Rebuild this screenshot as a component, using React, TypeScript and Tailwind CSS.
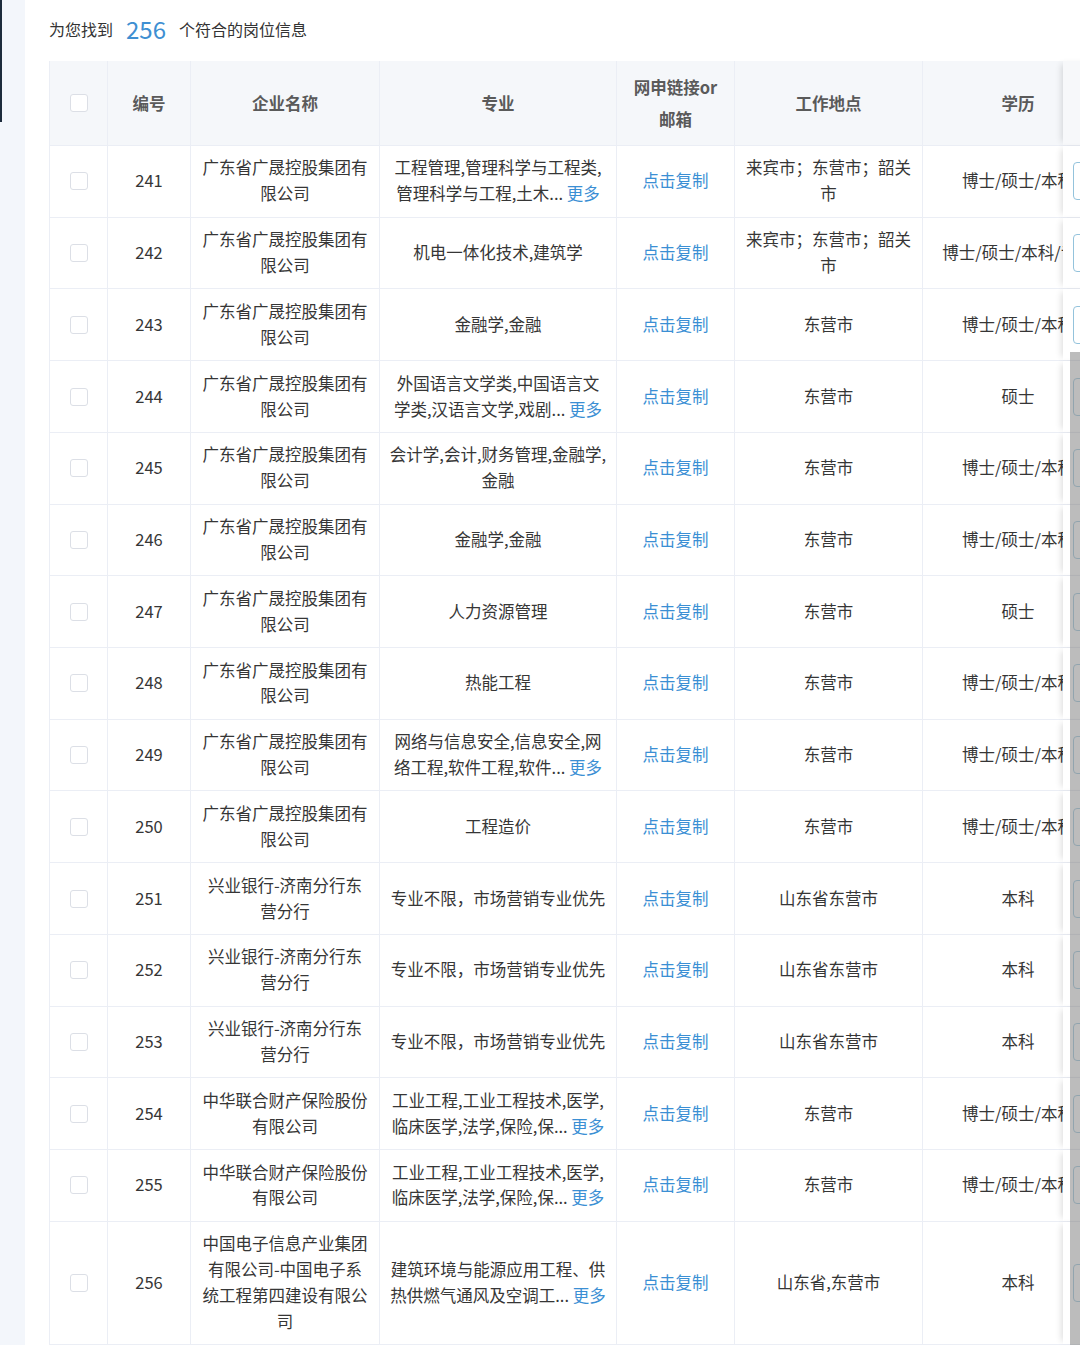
import React from "react";

type Row = {
  id: number;
  co: string[];
  major: string[];
  more?: boolean;
  loc: string[];
  edu: string;
};

const GD = ["广东省广晟控股集团有", "限公司"];
const XY = ["兴业银行-济南分行东", "营分行"];
const ZH = ["中华联合财产保险股份", "有限公司"];
const LB = ["来宾市；东营市；韶关", "市"];
const BSB = "博士/硕士/本科";

const rows: Row[] = [
  { id: 241, co: GD, major: ["工程管理,管理科学与工程类,", "管理科学与工程,土木..."], more: true, loc: LB, edu: BSB },
  { id: 242, co: GD, major: ["机电一体化技术,建筑学"], loc: LB, edu: "博士/硕士/本科/专科" },
  { id: 243, co: GD, major: ["金融学,金融"], loc: ["东营市"], edu: BSB },
  { id: 244, co: GD, major: ["外国语言文学类,中国语言文", "学类,汉语言文学,戏剧..."], more: true, loc: ["东营市"], edu: "硕士" },
  { id: 245, co: GD, major: ["会计学,会计,财务管理,金融学,", "金融"], loc: ["东营市"], edu: BSB },
  { id: 246, co: GD, major: ["金融学,金融"], loc: ["东营市"], edu: BSB },
  { id: 247, co: GD, major: ["人力资源管理"], loc: ["东营市"], edu: "硕士" },
  { id: 248, co: GD, major: ["热能工程"], loc: ["东营市"], edu: BSB },
  { id: 249, co: GD, major: ["网络与信息安全,信息安全,网", "络工程,软件工程,软件..."], more: true, loc: ["东营市"], edu: BSB },
  { id: 250, co: GD, major: ["工程造价"], loc: ["东营市"], edu: BSB },
  { id: 251, co: XY, major: ["专业不限，市场营销专业优先"], loc: ["山东省东营市"], edu: "本科" },
  { id: 252, co: XY, major: ["专业不限，市场营销专业优先"], loc: ["山东省东营市"], edu: "本科" },
  { id: 253, co: XY, major: ["专业不限，市场营销专业优先"], loc: ["山东省东营市"], edu: "本科" },
  { id: 254, co: ZH, major: ["工业工程,工业工程技术,医学,", "临床医学,法学,保险,保..."], more: true, loc: ["东营市"], edu: BSB },
  { id: 255, co: ZH, major: ["工业工程,工业工程技术,医学,", "临床医学,法学,保险,保..."], more: true, loc: ["东营市"], edu: BSB },
  {
    id: 256,
    co: ["中国电子信息产业集团", "有限公司-中国电子系", "统工程第四建设有限公", "司"],
    major: ["建筑环境与能源应用工程、供", "热供燃气通风及空调工..."],
    more: true,
    loc: ["山东省,东营市"],
    edu: "本科",
  },
];

const Checkbox = () => (
  <span className="block w-[18px] h-[18px] rounded-[3px] border border-[#dcdfe6] bg-white" />
);

const Lines = ({ lines, more }: { lines: string[]; more?: boolean }) => (
  <div className="text-center">
    {lines.map((l, i) => (
      <div key={i} className="whitespace-nowrap">
        {l}
        {more && i === lines.length - 1 && <span className="text-[#3b8fd4]"> 更多</span>}
      </div>
    ))}
  </div>
);

const cell = "flex items-center justify-center border-r border-[#ebeef5] shrink-0";

export default function App() {
  return (
    <div
      className="relative w-[1080px] h-[1345px] overflow-hidden flex bg-white text-[#363636]"
      style={{ fontFamily: '"Noto Sans CJK SC", "Noto Sans", sans-serif' }}
    >
      {/* left strip */}
      <div className="w-[25px] shrink-0 bg-[#f3f6fb]">
        <div className="w-[2px] h-[122px] bg-[#1d2b3c]" />
      </div>

      {/* main */}
      <div className="flex-1 pl-[24px] flex flex-col min-w-0">
        <div className="h-[61px] pb-[3px] flex items-center text-[16px] text-[#333] shrink-0">
          <span>为您找到</span>
          <span className="mx-[13px] text-[24px] text-[#3e8fd2] leading-none">256</span>
          <span>个符合的岗位信息</span>
        </div>

        <div className="flex flex-col text-[16.5px] leading-[25.87px]">
          {/* header */}
          <div className="flex h-[85px] bg-[#f5f7fa] border-b border-[#ebeef5] font-bold text-[#5a5a5a] leading-[32px]">
            <div className={`${cell} w-[59px] border-l`}>
              <Checkbox />
            </div>
            <div className={`${cell} w-[83px]`}>编号</div>
            <div className={`${cell} w-[189px]`}>企业名称</div>
            <div className={`${cell} w-[237px]`}>专业</div>
            <div className={`${cell} w-[118px] flex-col`}>
              <div>网申链接or</div>
              <div>邮箱</div>
            </div>
            <div className={`${cell} w-[188px]`}>工作地点</div>
            <div className="w-[140px] shrink-0 overflow-hidden flex items-center">
              <div className="w-[190px] shrink-0 text-center">学历</div>
            </div>
            <div className="w-[60px] shrink-0 bg-[#f7f8fa] shadow-[-5px_0_6px_-3px_rgba(0,0,0,0.12)]" />
          </div>

          {rows.map((r) => {
            const h = r.co.length > 2 ? "h-[123.5px]" : "h-[71.73px]";
            return (
              <div key={r.id} className={`flex ${h} border-b border-[#ebeef5]`}>
                <div className={`${cell} w-[59px] border-l`}>
                  <Checkbox />
                </div>
                <div className={`${cell} w-[83px]`}>{r.id}</div>
                <div className={`${cell} w-[189px]`}>
                  <Lines lines={r.co} />
                </div>
                <div className={`${cell} w-[237px]`}>
                  <Lines lines={r.major} more={r.more} />
                </div>
                <div className={`${cell} w-[118px] text-[#3b8fd4]`}>点击复制</div>
                <div className={`${cell} w-[188px]`}>
                  <Lines lines={r.loc} />
                </div>
                <div className="w-[140px] shrink-0 overflow-hidden flex items-center">
                  <div className="w-[190px] shrink-0 text-center whitespace-nowrap">{r.edu}</div>
                </div>
                <div className="w-[60px] shrink-0 bg-white flex items-center pl-[10px] shadow-[-5px_0_6px_-3px_rgba(0,0,0,0.12)]">
                  <div className="w-[80px] h-[38px] shrink-0 rounded-[4px] border border-[#94c3dc] bg-white" />
                </div>
              </div>
            );
          })}
        </div>
      </div>

      {/* scrollbar thumb */}
      <div className="absolute right-0 top-[352px] bottom-0 w-[10px] bg-[#8f8f8f]/60" />
    </div>
  );
}
